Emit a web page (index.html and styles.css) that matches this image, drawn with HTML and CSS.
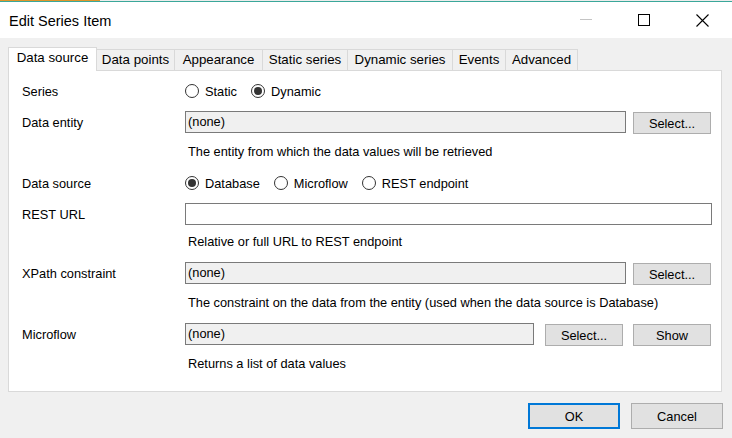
FILE: index.html
```html
<!DOCTYPE html>
<html>
<head>
<meta charset="utf-8">
<title>Edit Series Item</title>
<link rel="stylesheet" href="styles.css">
</head>
<body>
<div class="topstrip"><div class="topstrip-accent"></div></div>
<div class="titlebar">
  <span class="title">Edit Series Item</span>
  <div class="controls">
    <span class="ctl"><svg width="12" height="12" viewBox="0 0 12 12"><line x1="0" y1="5.5" x2="12" y2="5.5" stroke="#c4c4c4" stroke-width="1"/></svg></span>
    <span class="ctl"><svg width="12" height="12" viewBox="0 0 12 12"><rect x="0.5" y="0.5" width="11" height="11" fill="none" stroke="#000" stroke-width="1"/></svg></span>
    <span class="ctl"><svg width="13" height="13" viewBox="0 0 13 13"><path d="M0.5 0.5 L12.5 12.5 M12.5 0.5 L0.5 12.5" stroke="#000" stroke-width="1.1" fill="none"/></svg></span>
  </div>
</div>
<div class="content">
  <div class="tabs">
    <div class="tab tab-active w-ds">Data source</div>
    <div class="tab w-dp">Data points</div>
    <div class="tab w-ap">Appearance</div>
    <div class="tab w-ss">Static series</div>
    <div class="tab w-dy">Dynamic series</div>
    <div class="tab w-ev">Events</div>
    <div class="tab w-ad">Advanced</div>
  </div>
  <div class="panel">
    <div class="row">
      <div class="label">Series</div>
      <div class="radios">
        <span class="radio"><span class="circle"></span>Static</span>
        <span class="radio"><span class="circle checked"></span>Dynamic</span>
      </div>
    </div>
    <div class="row gap-9">
      <div class="label">Data entity</div>
      <div class="input readonly">(none)</div>
      <button class="btn side-btn last-btn">Select...</button>
    </div>
    <div class="desc gap-11">The entity from which the data values will be retrieved</div>
    <div class="row gap-13">
      <div class="label">Data source</div>
      <div class="radios">
        <span class="radio"><span class="circle checked"></span>Database</span>
        <span class="radio"><span class="circle"></span>Microflow</span>
        <span class="radio"><span class="circle"></span>REST endpoint</span>
      </div>
    </div>
    <div class="row gap-9">
      <div class="label">REST URL</div>
      <div class="input"></div>
    </div>
    <div class="desc gap-9">Relative or full URL to REST endpoint</div>
    <div class="row gap-13">
      <div class="label">XPath constraint</div>
      <div class="input readonly">(none)</div>
      <button class="btn side-btn last-btn">Select...</button>
    </div>
    <div class="desc gap-11">The constraint on the data from the entity (used when the data source is Database)</div>
    <div class="row gap-13">
      <div class="label">Microflow</div>
      <div class="input readonly">(none)</div>
      <button class="btn side-btn mid-btn">Select...</button>
      <button class="btn side-btn last-btn show-btn">Show</button>
    </div>
    <div class="desc gap-11">Returns a list of data values</div>
  </div>
  <div class="footer">
    <button class="btn footer-btn primary">OK</button>
    <button class="btn footer-btn">Cancel</button>
  </div>
</div>
</body>
</html>
```
FILE: styles.css
```css
html, body {
  margin: 0;
  padding: 0;
}
body {
  width: 732px;
  height: 438px;
  overflow: hidden;
  background: #f0f0f0;
  font-family: "Liberation Sans", Arial, sans-serif;
  font-size: 12.8px;
  color: #000;
}
.topstrip {
  height: 1px;
  background: #ececec;
}
.topstrip-accent {
  width: 100px;
  height: 1px;
  background: #e0962a;
}
.titlebar {
  height: 36px;
  border-top: 1px solid #3aa79a;
  background: #fff;
  display: flex;
  align-items: center;
  justify-content: space-between;
}
.title {
  font-size: 14.5px;
  padding-left: 9px;
  padding-top: 1px;
}
.controls {
  display: flex;
  align-self: stretch;
  padding-right: 1px;
}
.ctl {
  width: 58px;
  display: flex;
  align-items: center;
  justify-content: center;
}
.ctl svg {
  display: block;
}
.tabs {
  display: flex;
  align-items: flex-end;
  padding-left: 8px;
  margin-top: 9px;
  margin-bottom: -1px;
  position: relative;
}
.tab {
  box-sizing: border-box;
  border: 1px solid #d9d9d9;
  border-bottom: none;
  background: #f0f0f0;
  font-size: 13.3px;
  line-height: 16px;
  padding: 2px 0 2px 0;
  text-align: center;
  white-space: nowrap;
  margin-left: -1px;
  margin-bottom: 1px;
}
.tab-active {
  background: #fff;
  padding-bottom: 5px;
  margin-left: 0;
  margin-bottom: 0;
  position: relative;
  z-index: 2;
}
.w-ds { width: 89px; }
.w-dp { width: 79px; }
.w-ap { width: 89px; }
.w-ss { width: 86px; }
.w-dy { width: 106px; }
.w-ev { width: 54px; }
.w-ad { width: 73px; }
.panel {
  margin: 0 10px 0 8px;
  background: #fff;
  border: 1px solid #d9d9d9;
  padding: 9px 9px 20px 13px;
}
.row {
  display: flex;
  align-items: center;
  height: 22px;
}
.gap-9 { margin-top: 9px; }
.gap-11 { margin-top: 11px; }
.gap-13 { margin-top: 13px; }
.label {
  width: 163px;
  flex: none;
  line-height: 15px;
}
.radios {
  display: flex;
  align-items: center;
}
.radio {
  display: flex;
  align-items: center;
  margin-right: 14px;
  line-height: 15px;
}
.circle {
  box-sizing: border-box;
  width: 14px;
  height: 14px;
  border: 1px solid #333;
  border-radius: 50%;
  background: #fff;
  margin-right: 6px;
  display: flex;
  align-items: center;
  justify-content: center;
}
.circle.checked::after {
  content: "";
  width: 8px;
  height: 8px;
  border-radius: 50%;
  background: #333;
}
.input {
  box-sizing: border-box;
  flex: 1;
  height: 22px;
  border: 1px solid #7a7a7a;
  background: #fff;
  padding-left: 2px;
  line-height: 20px;
  white-space: nowrap;
}
.input.readonly {
  background: #f0f0f0;
}
.btn {
  box-sizing: border-box;
  font-family: inherit;
  font-size: 12.8px;
  color: #000;
  background: #e1e1e1;
  border: 1px solid #adadad;
  padding: 0;
  margin: 0;
}
.side-btn {
  width: 78px;
  height: 22px;
  margin-top: 2px;
  margin-left: 7px;
}
.side-btn.mid-btn {
  margin-left: 11px;
}
.side-btn.show-btn {
  margin-left: 10px;
}
.side-btn.last-btn {
  margin-right: 1px;
}
.desc {
  padding-left: 166px;
  line-height: 15px;
  white-space: nowrap;
}
.footer {
  display: flex;
  justify-content: flex-end;
  margin-top: 11px;
  padding-right: 9px;
}
.footer-btn {
  width: 92px;
  height: 26px;
  margin-left: 11px;
}
.footer-btn.primary {
  border: 2px solid #0078d7;
}
```
